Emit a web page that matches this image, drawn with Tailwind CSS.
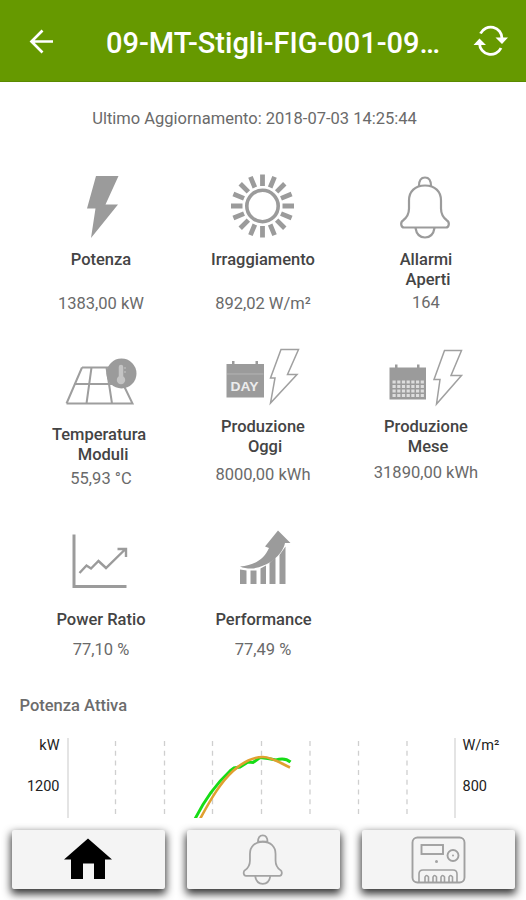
<!DOCTYPE html>
<html lang="it">
<head>
<meta charset="utf-8">
<title>Impianto</title>
<script src="https://cdn.jsdelivr.net/npm/@tailwindcss/browser@4"></script>
</head>
<body class="bg-white">
<div class="w-[526px] h-[900px] overflow-hidden flex flex-col bg-white font-[Roboto,sans-serif] text-[16.5px] leading-[20px] text-[#6a6a6a]">
  <header class="h-[82px] shrink-0 bg-[#669900] border-b border-[#5a8a00] flex items-center text-white">
    <svg class="w-[106px] h-[82px]" viewBox="0 0 106 82" fill="none" stroke="#fff" stroke-width="2.700"><path d="M53 41.500H31M42.500 30.500L31.500 41.500l11 11"/></svg>
    <h1 class="w-[350px] pt-[4px] text-[29px] leading-[36px] font-medium whitespace-nowrap"><span>09-MT-Stigli-FIG-001-09…</span></h1>
    <svg class="w-[70px] h-[82px]" viewBox="456 0 70 82" fill="none" stroke="#fff" stroke-width="2.800"><path d="M480.500 33.500A11.300 11.300 0 0 1 502 38.500M501 48A11.300 11.300 0 0 1 479.500 43.500"/><path d="M495.500 37.500h12.500l-6 6.500zM473.500 45H486l-6.500-6.500z" fill="#fff" stroke="none"/></svg>
  </header>
  <p class="h-[83px] shrink-0 pt-[27px] text-center pr-[17px] whitespace-nowrap"><span>Ultimo Aggiornamento: 2018-07-03 14:25:44</span></p>

  <main class="grid grid-cols-[162px_162px_164px] grid-rows-[175px_185px_170px] pl-[20px] shrink-0 text-center whitespace-nowrap">
    <section class="flex flex-col items-center">
      <svg class="w-[120px] h-[85px] shrink-0" viewBox="41 165 120 85"><path d="M96 176h22.500l-13 28.500H118L91 238l4.500-29.500H87z" fill="#9b9b9b"/></svg>
      <h2 class="font-medium text-[#444]">Potenza</h2>
      <p class="mt-[24px]">1383,00 kW</p>
    </section>
    <section class="flex flex-col items-center">
      <svg class="w-[120px] h-[85px] shrink-0" viewBox="203 165 120 85" fill="none" stroke="#9b9b9b"><circle cx="262.500" cy="206" r="15.700" stroke-width="3.600"/>
        <g stroke-width="4.800"><path id="rays" d="M262.500 174.500v11.500M262.500 226v11.500M231 206h11.500M282.500 206H294"/><use href="#rays" transform="rotate(22.500 262.500 206)"/><use href="#rays" transform="rotate(45 262.500 206)"/><use href="#rays" transform="rotate(67.500 262.500 206)"/></g></svg>
      <h2 class="font-medium text-[#444]">Irraggiamento</h2>
      <p class="mt-[24px]">892,02 W/m²</p>
    </section>
    <section class="flex flex-col items-center">
      <svg class="w-[120px] h-[85px] shrink-0" viewBox="366 165 120 85" fill="none" stroke="#9b9b9b" stroke-width="2.200"><path id="bell" d="M404 227.500c-3 0-4-5-1-7 4-3 6-6 6-12v-8c0-9 6-15 16-15s16 6 16 15v8c0 6 2 9 6 12 3 2 2 7-1 7zM419 186c0-5 2-8.500 6-8.500s6 3.500 6 8.500M415.500 228c1 6 4.500 9.500 9.500 9.500s8.500-3.500 9.500-9.500"/></svg>
      <h2 class="font-medium text-[#444]">Allarmi<br>&nbsp;Aperti</h2>
      <p class="mt-[3px]">164</p>
    </section>

    <section class="flex flex-col items-center">
      <svg class="w-[120px] h-[84px] shrink-0" viewBox="41 340 120 84" fill="none" stroke="#9e9e9e" stroke-width="2"><path d="M82 367.500h34M74 384h44M66.500 403.500h66L124 386M82 367.500L66.500 403.500M91.500 367.500L86.500 403.500M106.500 367.500l5.500 36"/><circle cx="121.500" cy="373.500" r="15" fill="#9b9b9b" stroke="none"/><path d="M121 367v11" stroke="#c4c4c4" stroke-width="4.500" stroke-linecap="round"/><circle cx="121" cy="380" r="4.200" fill="#c4c4c4" stroke="none"/><path d="M124 368h2M124 372h2" stroke="#c4c4c4" stroke-width="1"/></svg>
      <h2 class="font-medium text-[#444]"><span class="block mt-px pr-[4px]">Temperatura</span>&nbsp;Moduli</h2>
      <p class="mt-[4px]">55,93 °C</p>
    </section>
    <section class="flex flex-col items-center">
      <svg class="w-[120px] h-[77px] shrink-0" viewBox="203 340 120 77"><path d="M226.500 364H264v33.500h-37.500zM232 361h2.500v4H232zM255.500 361h2.500v4h-2.500z" fill="#9b9b9b"/><path d="M227 374h36.500" stroke="#b4b4b4"/><text x="244.500" y="391" font-family="Liberation Sans, sans-serif" font-size="13" font-weight="700" text-anchor="middle" textLength="28" lengthAdjust="spacingAndGlyphs" fill="#ececec">DAY</text><path d="M281 349.500h17.500l-11 25H297l-26.500 28.500 4.500-25h-4.500z" fill="none" stroke="#a0a0a0" stroke-width="1.500"/></svg>
      <h2 class="font-medium text-[#444]">Produzione<br>&nbsp;Oggi</h2>
      <p class="mt-[8px]">8000,00 kWh</p>
    </section>
    <section class="flex flex-col items-center">
      <svg class="w-[120px] h-[77px] shrink-0" viewBox="366 340 120 77"><path d="M389.500 367.500H426v32h-36.500zM395 364.500h2.500v4H395zM417 364.500h2.500v4H417z" fill="#9b9b9b"/><path d="M392.500 382h31.500M392.500 386.500h31.500M392.500 391h31.500M392.500 395.500h31.500" stroke="#ddd" stroke-width="3.200" stroke-dasharray="3.200 1.500"/><path d="M444.500 350.500h17l-10.500 25h10.500l-25 28.500 3.500-24.500h-6z" fill="none" stroke="#a0a0a0" stroke-width="1.500"/></svg>
      <h2 class="font-medium text-[#444]">Produzione<br>&nbsp;Mese</h2>
      <p class="mt-[6px]">31890,00 kWh</p>
    </section>

    <section class="flex flex-col items-center">
      <svg class="w-[120px] h-[85px] shrink-0" viewBox="41 525 120 85" fill="none" stroke="#9b9b9b"><path d="M74 534.500v52h52.500" stroke-width="3"/><path d="M79.500 573l7-7.500 4.500 3 7.500-7.500 7.500 7 19-18.500M117.500 549h8.500v8" stroke-width="2.400"/></svg>
      <h2 class="font-medium text-[#444]">Power Ratio</h2>
      <p class="mt-[10px]">77,10 %</p>
    </section>
    <section class="flex flex-col items-center">
      <svg class="w-[120px] h-[85px] shrink-0" viewBox="203 525 120 85" fill="#9b9b9b"><path d="M240 566.500c14-1 24-7 29-18.500l-4-1.500 13-16 12.500 12.500h-5.500c-3 14-20 25-34 25.500-4 0-8-.5-11-2zM240 569.500l6.500 1v13.500H240zM250.500 570.500h6V584h-6zM260.500 568.500l5.500-3V584h-5.500zM269.500 563l6-5V584h-6zM279.500 555l6-8.500V584h-6z"/></svg>
      <h2 class="pl-px font-medium text-[#444]">Performance</h2>
      <p class="mt-[10px]">77,49 %</p>
    </section>
  </main>

  <h3 class="h-[35px] shrink-0 pl-[19.5px] pt-px font-medium text-[#6c6c6c]">Potenza Attiva</h3>
  <svg class="w-[526px] h-[88px] shrink-0" viewBox="0 730 526 88" fill="none">
    <path d="M68 738v81M455 738v81" stroke="#d6d6d6" stroke-width="1.300"/>
    <path d="M115.500 741v74M164.500 741v74M212.500 741v74M261.500 741v74M310 741v74M358.500 741v74M407 741v74" stroke="#cfcfcf" stroke-width="1.300" stroke-dasharray="5 4.700"/>
    <path d="M195 819C204 801 216 784 230 771l4-3 6-1 8-5 5 .5 7-5 8 1 8 1.500c6-2 11-1 14.500 2" stroke="#16dc16" stroke-width="3"/>
    <path d="M200 819C212 797 221 782 233 771c12-11 23-14 30-14 9 0 17 6 27 10.500" stroke="#e0a030" stroke-width="2.600"/>
    <g fill="#222" font-size="14.500"><text x="59.500" y="750" text-anchor="end">kW</text><text x="59.500" y="791" text-anchor="end">1200</text><text x="462.500" y="750">W/m²</text><text x="462.500" y="791">800</text></g>
  </svg>

  <nav class="h-[82px] shrink-0 flex gap-[22px] pl-[12px] pt-[12px] bg-white">
    <div class="w-[153px] h-[59px] shrink-0 rounded-[2px] bg-[#f4f4f4] shadow-[0_4px_9px_1px_rgba(0,0,0,0.8)]">
      <svg class="w-full h-full" viewBox="12 830 153 59"><path d="M88 838.500l24 21h-7V879H94v-15.500H83V879H71v-19.500h-7z" fill="#000"/></svg>
    </div>
    <div class="w-[153px] h-[59px] shrink-0 rounded-[2px] bg-[#f4f4f4] shadow-[0_4px_9px_1px_rgba(0,0,0,0.8)]">
      <svg class="w-full h-full" viewBox="187 830 153 59" fill="none" stroke="#a3a3a3" stroke-width="2.200"><use href="#bell" transform="translate(-77.250 691.500) scale(.8 .81)"/><path d="M257.700 841.500h9.600" stroke-width="1.500"/></svg>
    </div>
    <div class="w-[153px] h-[59px] shrink-0 rounded-[2px] bg-[#f4f4f4] shadow-[0_4px_9px_1px_rgba(0,0,0,0.8)]">
      <svg class="w-full h-full" viewBox="362 830 153 59" fill="none" stroke="#a0a0a0" stroke-width="1.900"><rect x="412.500" y="837.500" width="52" height="45" rx="5"/><rect x="421.500" y="845" width="21.500" height="9"/><circle cx="453" cy="855.500" r="5.500"/><circle cx="453" cy="855.500" r="1" fill="#a3a3a3" stroke="none"/><circle cx="436.500" cy="861.500" r="1.500" fill="#a3a3a3" stroke="none"/><path d="M419 882v-8q0-4 4-4h30q4 0 4 4v8M425 882v-5q1.500-3 3.500 0v5M433 882v-5q1.500-3 3.500 0v5M441 882v-5q1.500-3 3.500 0v5M449 882v-5q1.500-3 3.500 0v5" stroke-width="1.600"/></svg>
    </div>
  </nav>
</div>
</body>
</html>
